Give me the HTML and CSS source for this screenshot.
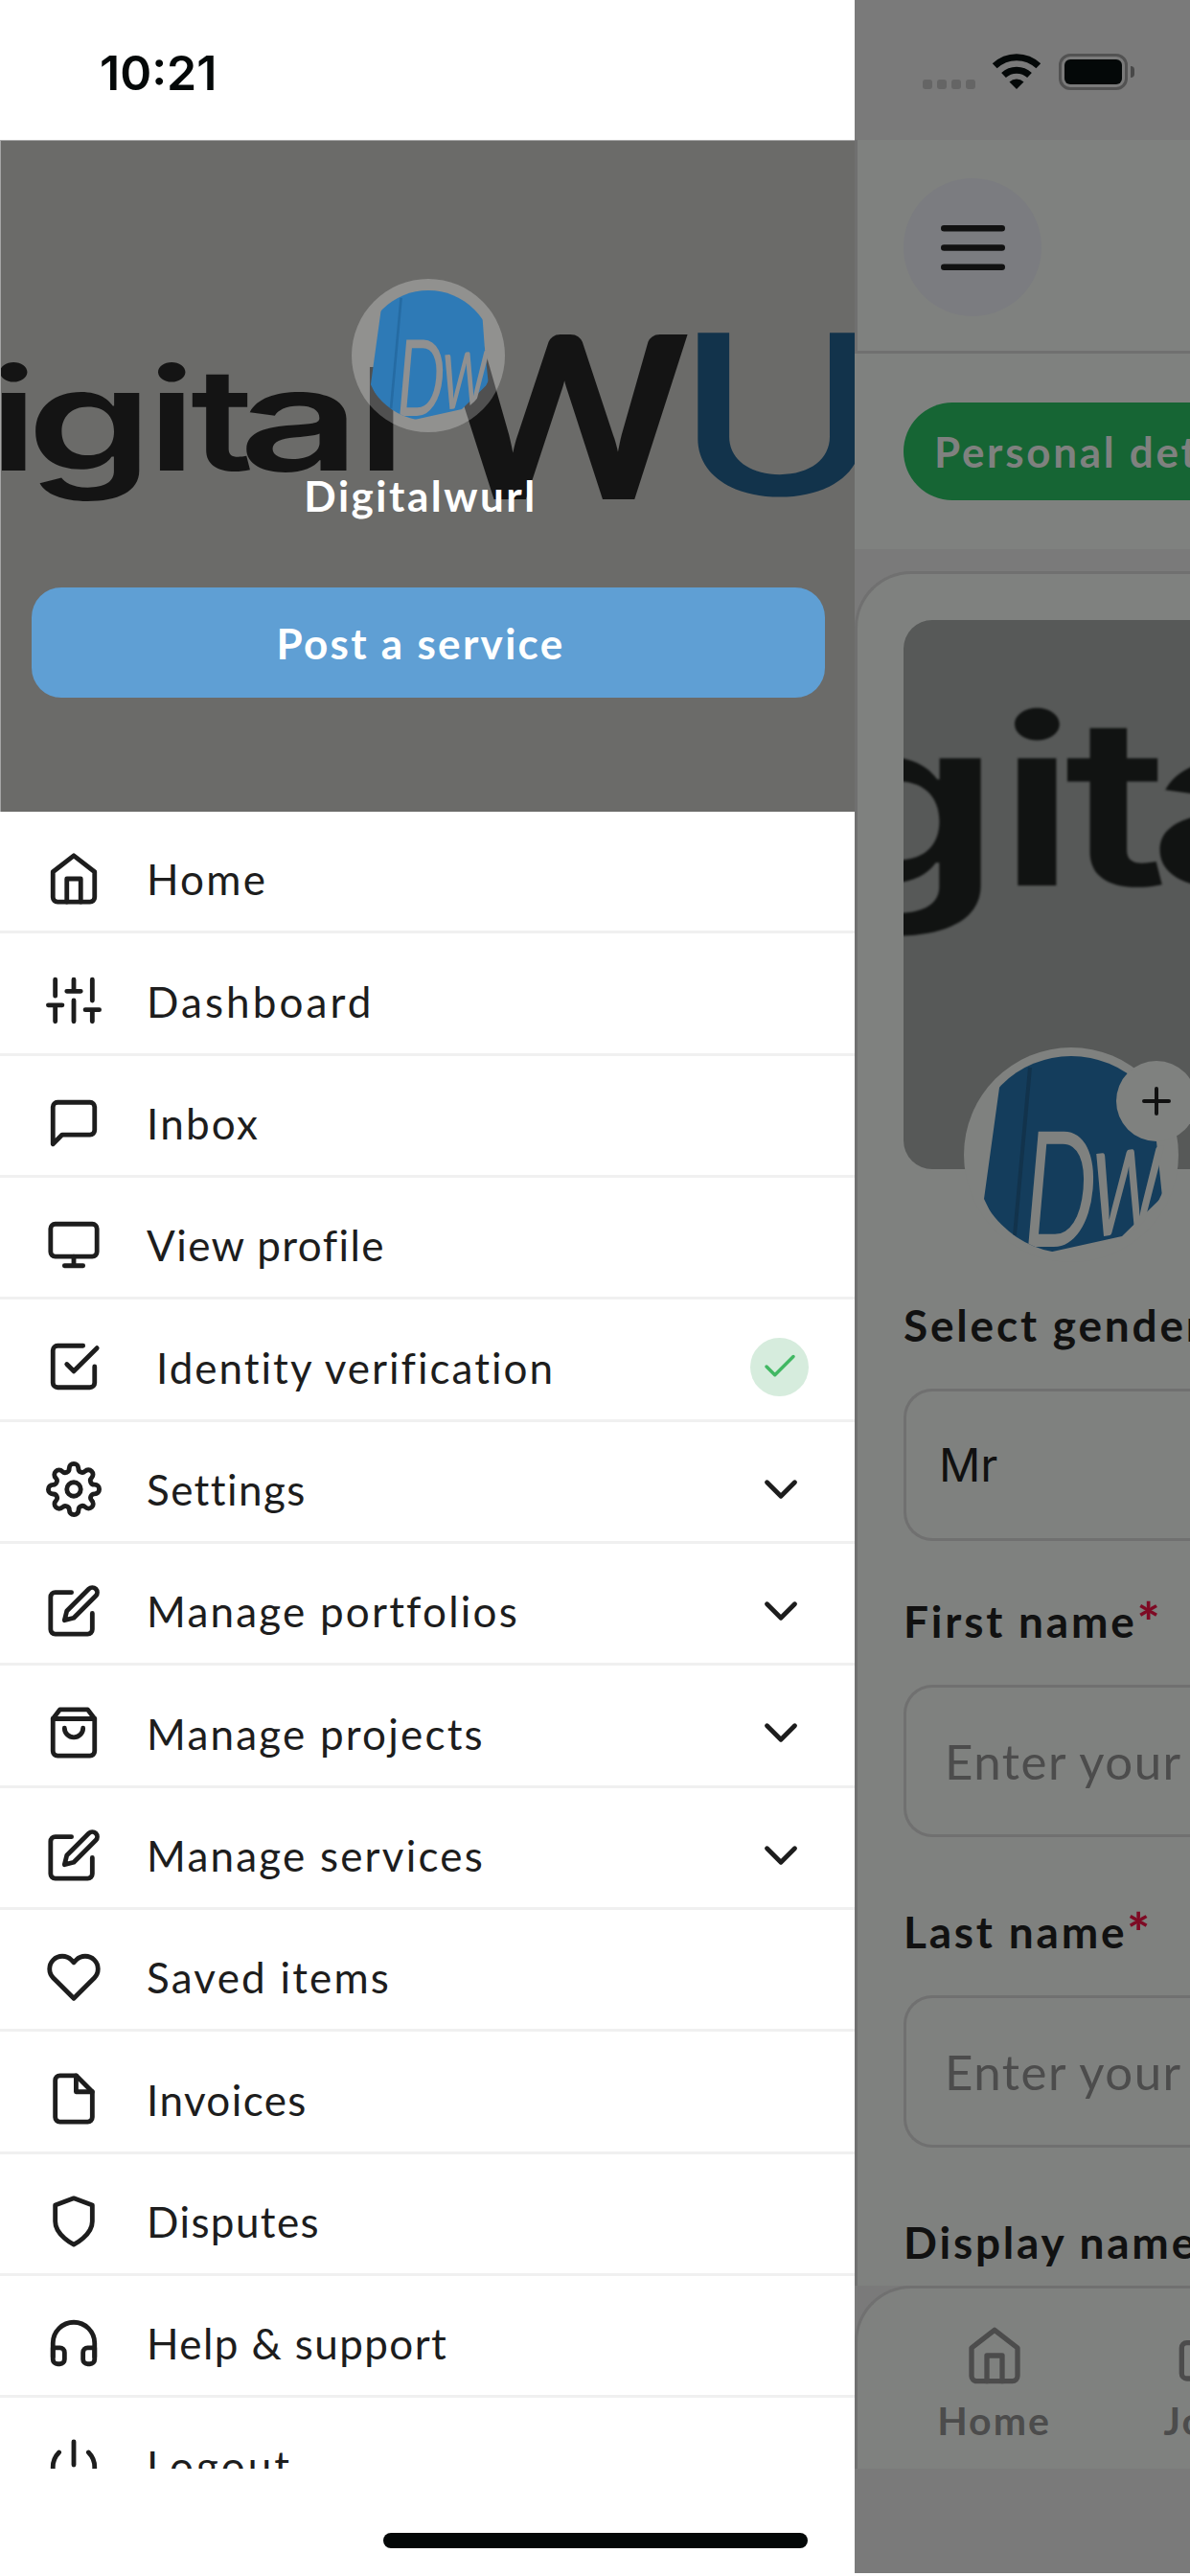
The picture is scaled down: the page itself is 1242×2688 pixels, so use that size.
FILE: index.html
```html
<!DOCTYPE html>
<html lang="en">
<head>
    <meta charset="UTF-8">
    <meta name="viewport" content="width=device-width, initial-scale=1.0">
    <title>Digitalwurl</title>
    <link rel="stylesheet" href="styles.css">
</head>
<body>
    <svg class="defs" width="0" height="0">
        <clipPath id="circle"><circle cx="0" cy="0" r="103"/></clipPath>
        <symbol id="mark" viewBox="-103 -103 206 206">
            <g clip-path="url(#circle)">
                <path class="mark-bg" d="M-66 -110 L-75 -70 L-91 46 L-60 110 L-24 102 L53 85 L95 44 L89 -14 L82 -110 Z"/>
                <path class="mark-fold" d="M-43 -91 L-59 84"/>
                <text class="mark-text" transform="translate(-54 96) skewX(-5) scale(1 1.68)" font-size="100">D</text>
                <text class="mark-text" transform="translate(17 87) rotate(-7) skewX(-12) scale(.95 1.7)" font-size="100">w</text>
            </g>
        </symbol>
        <symbol id="home" viewBox="0 0 24 24"><path d="M3 9l9-7 9 7v11a2 2 0 0 1-2 2H5a2 2 0 0 1-2-2z"/><path d="M9 22V12h6v10"/></symbol>
        <symbol id="edit" viewBox="0 0 24 24"><path d="M11 4H4a2 2 0 0 0-2 2v14a2 2 0 0 0 2 2h14a2 2 0 0 0 2-2v-7"/><path d="M18.5 2.5a2.121 2.121 0 0 1 3 3L12 15l-4 1 1-4 9.5-9.5z"/></symbol>
        <symbol id="chevron" viewBox="0 0 24 24"><path d="M6 9l6 6 6-6"/></symbol>
    </svg>

    <aside class="drawer">
        <div class="time">10:21</div>
        <div class="banner">
            <svg class="banner-logo" viewBox="0 0 892 701">
                <g class="logo-dark" font-size="148">
                    <text transform="translate(-12 344) scale(1.3 1)">i</text>
                    <text transform="translate(27 344) scale(1.42 1)">g</text>
                    <text transform="translate(153 344) scale(1.3 1)">i</text>
                    <text transform="translate(198 344) scale(1.25 1)">t</text>
                    <text transform="translate(248 344) scale(1.5 1)">a</text>
                    <text transform="translate(372 344) scale(1.3 1)">l</text>
                </g>
                <text class="logo-dark logo-w" font-size="237" y="374" x="458" textLength="260" lengthAdjust="spacingAndGlyphs">W</text>
                <text class="logo-blue" transform="scale(1.27 1)" font-size="232" y="369" x="554">U</text>
            </svg>
            <div class="user">
                <div class="user-photo"><svg><use href="#mark"/></svg></div>
                <div class="user-name">Digitalwurl</div>
                <button class="post-btn">Post a service</button>
            </div>
        </div>
        <ul class="menu">
            <li><svg class="icon"><use href="#home"/></svg><span>Home</span></li>
            <li><svg class="icon" viewBox="0 0 24 24"><path d="M4 21v-7M4 10V3M12 21v-9M12 8V3M20 21v-5M20 12V3M1 14h6M9 8h6M17 16h6"/></svg><span class="wide">Dashboard</span></li>
            <li><svg class="icon" viewBox="0 0 24 24"><path d="M21 15a2 2 0 0 1-2 2H7l-4 4V5a2 2 0 0 1 2-2h14a2 2 0 0 1 2 2z"/></svg><span>Inbox</span></li>
            <li><svg class="icon" viewBox="0 0 24 24"><rect x="2" y="3" width="20" height="14" rx="2"/><path d="M8 21h8M12 17v4"/></svg><span class="tight">View profile</span></li>
            <li class="identity"><svg class="icon" viewBox="0 0 24 24"><path d="M9 11l3 3L22 4"/><path d="M21 12v7a2 2 0 0 1-2 2H5a2 2 0 0 1-2-2V5a2 2 0 0 1 2-2h11"/></svg><span>Identity verification</span>
                <div class="verified"><svg viewBox="0 0 24 24"><path d="M20 6L9 17l-5-5"/></svg></div></li>
            <li><svg class="icon" viewBox="0 0 24 24"><circle cx="12" cy="12" r="3"/><path d="M19.4 15a1.65 1.65 0 0 0 .33 1.82l.06.06a2 2 0 0 1 0 2.83 2 2 0 0 1-2.83 0l-.06-.06a1.65 1.65 0 0 0-1.82-.33 1.65 1.65 0 0 0-1 1.51V21a2 2 0 0 1-2 2 2 2 0 0 1-2-2v-.09A1.65 1.65 0 0 0 9 19.4a1.65 1.65 0 0 0-1.82.33l-.06.06a2 2 0 0 1-2.83 0 2 2 0 0 1 0-2.83l.06-.06a1.65 1.65 0 0 0 .33-1.82 1.65 1.65 0 0 0-1.51-1H3a2 2 0 0 1-2-2 2 2 0 0 1 2-2h.09A1.65 1.65 0 0 0 4.6 9a1.65 1.65 0 0 0-.33-1.82l-.06-.06a2 2 0 0 1 0-2.83 2 2 0 0 1 2.83 0l.06.06a1.65 1.65 0 0 0 1.82.33H9a1.65 1.65 0 0 0 1-1.51V3a2 2 0 0 1 2-2 2 2 0 0 1 2 2v.09a1.65 1.65 0 0 0 1 1.51 1.65 1.65 0 0 0 1.82-.33l.06-.06a2 2 0 0 1 2.83 0 2 2 0 0 1 0 2.83l-.06.06a1.65 1.65 0 0 0-.33 1.82V9a1.65 1.65 0 0 0 1.51 1H21a2 2 0 0 1 2 2 2 2 0 0 1-2 2h-.09a1.65 1.65 0 0 0-1.51 1z"/></svg><span class="tight">Settings</span><svg class="icon arrow"><use href="#chevron"/></svg></li>
            <li><svg class="icon"><use href="#edit"/></svg><span>Manage portfolios</span><svg class="icon arrow"><use href="#chevron"/></svg></li>
            <li><svg class="icon" viewBox="0 0 24 24"><path d="M6 2L3 6v14a2 2 0 0 0 2 2h14a2 2 0 0 0 2-2V6l-3-4z"/><path d="M3 6h18M16 10a4 4 0 0 1-8 0"/></svg><span>Manage projects</span><svg class="icon arrow"><use href="#chevron"/></svg></li>
            <li><svg class="icon"><use href="#edit"/></svg><span>Manage services</span><svg class="icon arrow"><use href="#chevron"/></svg></li>
            <li><svg class="icon" viewBox="0 0 24 24"><path d="M20.84 4.61a5.5 5.5 0 0 0-7.78 0L12 5.67l-1.06-1.06a5.5 5.5 0 0 0-7.78 7.78l1.06 1.06L12 21.23l7.78-7.78 1.06-1.06a5.5 5.5 0 0 0 0-7.78z"/></svg><span>Saved items</span></li>
            <li><svg class="icon" viewBox="0 0 24 24"><path d="M13 2H6a2 2 0 0 0-2 2v16a2 2 0 0 0 2 2h12a2 2 0 0 0 2-2V9z"/><path d="M13 2v7h7"/></svg><span class="tight">Invoices</span></li>
            <li><svg class="icon" viewBox="0 0 24 24"><path d="M12 22s8-4 8-10V5l-8-3-8 3v7c0 6 8 10 8 10z"/></svg><span class="tight">Disputes</span></li>
            <li><svg class="icon" viewBox="0 0 24 24"><path d="M3 18v-6a9 9 0 0 1 18 0v6"/><path d="M21 19a2 2 0 0 1-2 2h-1a2 2 0 0 1-2-2v-3a2 2 0 0 1 2-2h3zM3 19a2 2 0 0 0 2 2h1a2 2 0 0 0 2-2v-3a2 2 0 0 0-2-2H3z"/></svg><span class="tight">Help &amp; support</span></li>
            <li><svg class="icon" viewBox="0 0 24 24"><path d="M18.36 6.64a9 9 0 1 1-12.73 0M12 2v10"/></svg><span class="wide">Logout</span></li>
        </ul>
        <div class="home-indicator"></div>
    </aside>

    <main class="page">
        <div class="status">
            <div class="dots"><i></i><i></i><i></i><i></i></div>
            <svg class="wifi" viewBox="0 0 52 38"><path d="M26 38l-7.500-7.500a11 11 0 0 1 15 0z"/><path class="arc" d="M12.500 23.500a20 20 0 0 1 27 0M3.200 13.800a33 33 0 0 1 45.600 0"/></svg>
            <div class="battery"></div>
            <div class="battery-tip"></div>
        </div>
        <header class="header">
            <div class="burger"><svg viewBox="0 0 67 47"><path d="M3.300 3.300h60.400M3.300 23.500h60.400M3.300 43.700h60.400"/></svg></div>
        </header>
        <div class="chips"><div class="chip">Personal details</div></div>
        <div class="content">
            <div class="card">
                <div class="cover">
                    <svg viewBox="0 0 299 573">
                        <g class="cover-logo" font-size="243">
                            <text transform="translate(-112 277) scale(1.42 1)">g</text>
                            <text transform="translate(98 277) scale(1.3 1)">i</text>
                            <text transform="translate(168 277) scale(1.25 1)">t</text>
                            <text transform="translate(254 277) scale(1.5 1)">a</text>
                        </g>
                    </svg>
                    <div class="avatar"><svg><use href="#mark"/></svg></div>
                    <div class="add"><svg viewBox="0 0 30 30"><path d="M15 2v26M2 15h26"/></svg></div>
                </div>
                <div class="field">
                    <label>Select gender</label>
                    <div class="input select">Mr</div>
                </div>
                <div class="field">
                    <label>First name<b>*</b></label>
                    <div class="input">Enter your first name</div>
                </div>
                <div class="field">
                    <label>Last name<b>*</b></label>
                    <div class="input">Enter your last name</div>
                </div>
                <div class="field">
                    <label>Display name</label>
                </div>
            </div>
        </div>
        <nav class="tabs">
            <div class="tab"><svg class="icon"><use href="#home"/></svg>Home</div>
            <div class="tab"><svg class="icon" viewBox="0 0 24 24"><rect x="2" y="7" width="20" height="14" rx="2"/><path d="M16 21V5a2 2 0 0 0-2-2h-4a2 2 0 0 0-2 2v16"/></svg>Jobs</div>
        </nav>
    </main>
</body>
</html>
```
FILE: styles.css
```css
* { box-sizing: border-box; }
body { margin: 0; width: 1242px; height: 2688px; display: flex; overflow: hidden; background: #fff; font-family: Lato, sans-serif; color: #1d1d1d; }
svg { display: block; }
.defs { position: absolute; }
.icon { width: 58px; height: 58px; flex: none; fill: none; stroke: currentColor; stroke-width: 2; stroke-linecap: round; stroke-linejoin: round; }

/* drawer */
.drawer { --mark: #2e7ab6; --fold: #256ba3; --ink: #909090; width: 892px; height: 2688px; flex: none; display: flex; flex-direction: column; background: #fff; }
.time { height: 146px; padding: 48px 0 0 104px; flex: none; font: 600 50px/56px Inter, sans-serif; color: #040808; }
.banner { height: 701px; flex: none; display: grid; background: #6b6b69; border-left: 1px solid #a5a5a5; border-top: 1px solid #a5a5a5; overflow: hidden; }
.banner > * { grid-area: 1 / 1; }
.banner-logo { width: 892px; height: 701px; font-family: Inter, sans-serif; font-weight: 600; }
.logo-dark { fill: #141414; }
.logo-w { font-family: Lato, sans-serif; font-weight: 900; }
.logo-blue { fill: #12334b; font-weight: 500; }
.user { z-index: 1; display: flex; flex-direction: column; align-items: center; padding: 144px 31px 0; }
.user-photo { width: 160px; height: 160px; padding: 12px; border-radius: 50%; background: rgba(255, 255, 255, .26); }
.user-photo svg { width: 136px; height: 136px; }
.user-name { margin-top: 38px; margin-right: 16px; font-size: 44px; line-height: 56px; font-weight: 700; letter-spacing: 2.500px; color: #fff; }
.post-btn { margin-top: 68px; width: 828px; height: 115px; padding: 1px 16px 0 0; border: 0; border-radius: 31px; background: #5f9fd4; color: #fff; font: 700 44px/56px Lato, sans-serif; letter-spacing: 2.300px; }
.mark-bg { fill: var(--mark); }
.mark-fold { fill: none; stroke: var(--fold); stroke-width: 4; }
.mark-text { fill: var(--ink); font-family: Lato, sans-serif; font-weight: 400; }

.menu { height: 1729px; margin: 0; padding: 0; flex: none; overflow: hidden; list-style: none; }
.menu li { height: 127.330px; padding: 15.500px 48px 0; display: flex; align-items: center; border-bottom: 3px solid #f0f0f0; }
.menu span { flex: 1; margin: 1px 0 0 47px; font-size: 44px; line-height: 56px; letter-spacing: 2.200px; }
.menu .wide { letter-spacing: 3.100px; }
.menu .tight { letter-spacing: 1.400px; }
.menu .identity span { margin-left: 57px; letter-spacing: 2px; }
.verified { width: 61px; height: 61px; border-radius: 50%; background: #d6ecdd; display: flex; align-items: center; justify-content: center; }
.verified svg { width: 42px; height: 42px; fill: none; stroke: #41b863; stroke-width: 2; stroke-linecap: round; stroke-linejoin: round; }
.home-indicator { width: 443px; height: 16px; margin: 67px 0 0 400px; border-radius: 8px; background: #040808; }

/* dimmed page */
.page { --mark: #143d5c; --fold: #12334c; --ink: #7f817f; width: 350px; height: 2685px; flex: none; display: flex; flex-direction: column; overflow: hidden; background: #7a7a7a; white-space: nowrap; }
.status { height: 146px; padding: 55px 0 0 71px; flex: none; display: flex; align-items: flex-start; }
.dots { display: flex; gap: 5px; margin-top: 28px; }
.dots i { width: 10px; height: 10px; border-radius: 3px; background: #656565; }
.wifi { width: 52px; height: 38px; margin-left: 17px; fill: #040808; overflow: visible; }
.wifi .arc { fill: none; stroke: #040808; stroke-width: 7; }
.battery { width: 72px; height: 38px; margin: 1px 0 0 18px; border: 3px solid #525252; border-radius: 12px; padding: 3px; background: #040808 content-box; }
.battery-tip { width: 4px; height: 12px; margin: 14px 0 0 3px; border-radius: 0 4px 4px 0; background: #484848; }
.header { height: 223px; padding: 40px 0 0 48px; flex: none; background: #7f817f; border-left: 3px solid #707070; border-bottom: 3px solid #707070; }
.burger { width: 144px; height: 144px; border-radius: 50%; background: #7b7c80; display: flex; align-items: center; justify-content: center; }
.burger svg { width: 67px; height: 47px; stroke: #111; stroke-width: 6.600; stroke-linecap: round; }
.chips { height: 204px; padding: 51px 0 0 51px; flex: none; background: #7f817f; }
.chip { width: 420px; height: 102px; padding-left: 32px; border-radius: 51px; background: #166534; color: #7f817f; font-size: 44px; line-height: 103px; font-weight: 700; letter-spacing: 2.700px; }
.content { height: 1812px; padding-top: 23px; flex: none; overflow: hidden; }
.card { height: 2000px; padding: 48px 0 0 48px; background: #7f817f; border-left: 3px solid #707070; border-top: 3px solid #707070; border-top-left-radius: 59px; }
.cover { position: relative; width: 299px; height: 573px; margin-bottom: 135px; border-radius: 30px 0 0 30px; background: #575958; }
.cover > svg { width: 299px; height: 573px; border-radius: 30px 0 0 30px; }
.cover-logo { fill: #111312; font-family: Inter, sans-serif; font-weight: 600; filter: blur(1px); }
.avatar { position: absolute; left: 63px; top: 446px; width: 224px; height: 224px; padding: 9px; border-radius: 50%; background: #7f817f; }
.avatar svg { width: 206px; height: 206px; }
.add { position: absolute; left: 222px; top: 460px; width: 84px; height: 84px; border-radius: 50%; background: #7f817f; display: flex; align-items: center; justify-content: center; }
.add svg { width: 30px; height: 30px; stroke: #111; stroke-width: 4; stroke-linecap: round; }
.field { margin-bottom: 70px; }
.field:nth-child(2) { margin-bottom: 55px; }
.field label { display: block; height: 56px; margin-bottom: 38px; font-size: 46px; line-height: 56px; font-weight: 700; letter-spacing: 2.800px; color: #111; }
.field:nth-child(n+3) label { margin-bottom: 39px; padding-top: 1px; }
.field b { position: relative; top: 4px; font-weight: 900; font-size: 56px; line-height: 40px; color: #7e0a24; }
.input { height: 159px; padding-left: 40px; border: 3px solid #707070; border-right: 0; border-radius: 30px 0 0 30px; font-size: 51px; line-height: 153px; letter-spacing: 1.500px; color: #4c4c4c; overflow: hidden; }
.input.select { padding-left: 34px; font: 400 48px/153px Inter, sans-serif; letter-spacing: 0; color: #111; }
.tabs { height: 191px; padding-top: 38px; flex: none; display: flex; background: #7f817f; border-left: 3px solid #707070; border-top: 3px solid #707070; border-top-left-radius: 59px; color: #4c4c4c; }
.tab { width: 227px; margin-left: 29px; flex: none; display: flex; flex-direction: column; align-items: center; font-size: 41px; line-height: 50px; font-weight: 700; letter-spacing: 2px; }
.tab + .tab { margin-left: -5px; }
.tab .icon { width: 64px; height: 64px; margin-bottom: 11px; }
```
